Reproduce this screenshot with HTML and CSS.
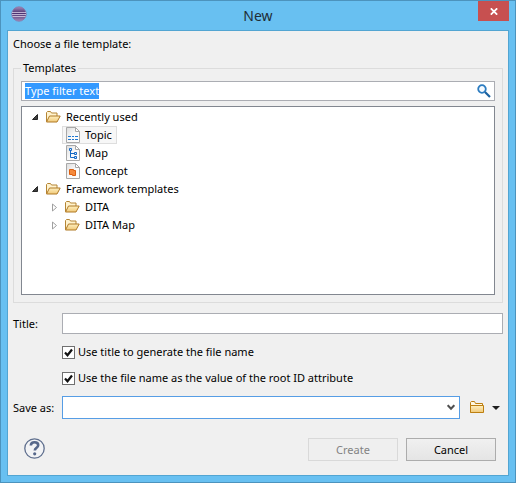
FILE: index.html
```html
<!DOCTYPE html>
<html lang="en">
<head>
<meta charset="utf-8">
<title>New</title>
<link rel="stylesheet" href="styles.css">
</head>
<body>
<svg class="defs" width="0" height="0" aria-hidden="true">
  <defs>
    <linearGradient id="gold" x1="0" y1="0" x2="0" y2="1"><stop offset="0" stop-color="#fff0c0"/><stop offset="1" stop-color="#f0c878"/></linearGradient>
    <linearGradient id="orb" x1="0" y1="0" x2="0" y2="1"><stop offset="0" stop-color="#a58cba"/><stop offset=".45" stop-color="#4a3070"/><stop offset="1" stop-color="#a58cba"/></linearGradient>
    <linearGradient id="page" x1="0" y1="0" x2="1" y2="1"><stop offset="0" stop-color="#dcdcdc"/><stop offset=".5" stop-color="#f8f8f8"/><stop offset="1" stop-color="#fff"/></linearGradient>
    <symbol id="folder-open" viewBox="0 0 16 16">
      <path d="M1.500 12.500v-9l1-1h3l1 1.500h5.500v3" fill="#fff3cf" stroke="#b58534"/>
      <path d="M1.500 13L4.500 7h10.700L12 13z" fill="url(#gold)" stroke="#b07a26"/>
    </symbol>
    <symbol id="doc" viewBox="0 0 14 16">
      <path d="M.5.5h9l4 4v11H.5z" fill="url(#page)" stroke="#a8a8a8"/>
      <path d="M9.500.5v4h4z" fill="#fff" stroke="#a8a8a8"/>
    </symbol>
    <symbol id="open" viewBox="0 0 6 6"><path d="M5.500.5v5h-5z" fill="#404040" stroke="#262626"/></symbol>
    <symbol id="closed" viewBox="0 0 7 9"><path d="M1.500 1v7L5.500 4.500z" fill="#fff" stroke="#a0a0a0"/></symbol>
    <symbol id="tick" viewBox="0 0 13 13"><path d="M3 6.500l2.500 2.700L10 3.500" fill="none" stroke="#111" stroke-width="2.200"/></symbol>
  </defs>
</svg>

<div class="window">
  <header class="titlebar">
    <svg class="app-icon" width="16" height="16" viewBox="0 0 16 16" aria-hidden="true">
      <circle cx="8" cy="8" r="7.200" fill="url(#orb)" stroke="#8a74a6" stroke-width=".8"/>
      <path d="M1 6.500h14M1 8.500h14M1.500 10.500h13" stroke="#d9cfe6" stroke-opacity=".8"/>
    </svg>
    <h1 class="title">New</h1>
    <button class="close" type="button" aria-label="Close">
      <svg width="8" height="7" viewBox="0 0 8 7"><path d="M.8.3l6.400 6.400M7.200.3L.8 6.700" stroke="#fff" stroke-width="1.700"/></svg>
    </button>
  </header>

  <form class="client">
    <p class="prompt">Choose a file template:</p>

    <fieldset class="group">
      <legend>Templates</legend>
      <div class="filter">
        <input id="filter" class="filter-text" type="text" value="Type filter text" aria-label="Filter templates" spellcheck="false" autocomplete="off">
        <svg width="14" height="14" viewBox="0 0 14 14" aria-hidden="true"><circle cx="5" cy="5" r="3.800" fill="#f4faff" stroke="#2c7cc0" stroke-width="1.800"/><path d="M8 8l5 5" stroke="#1c62a0" stroke-width="2.200"/></svg>
      </div>

      <ul class="tree" role="tree">
        <li role="treeitem" aria-expanded="true">
          <div class="row"><span class="twisty"><svg width="6" height="6"><use href="#open"/></svg></span><svg width="16" height="16"><use href="#folder-open"/></svg><span class="name">Recently used</span></div>
          <ul role="group">
            <li role="treeitem" aria-selected="true"><div class="row"><span class="twisty"></span><span class="item selected"><svg width="14" height="16"><use href="#doc"/><path d="M2 9.500h3m1 0h2m1 0h3M2 12.500h3m1 0h2m1 0h3" stroke="#1e78d2"/></svg><span class="name">Topic</span></span></div></li>
            <li role="treeitem"><div class="row"><span class="twisty"></span><span class="item"><svg width="14" height="16"><use href="#doc"/><path d="M4.500 5v7.500H8M4.500 8.500H8" fill="none" stroke="#1469c4"/><path d="M3.500 3.500h2v2h-2zM8.500 7.500h2v2h-2zM8.500 11.500h2v2h-2z" fill="#dcecff" stroke="#1469c4"/></svg><span class="name">Map</span></span></div></li>
            <li role="treeitem"><div class="row"><span class="twisty"></span><span class="item"><svg width="14" height="16"><use href="#doc"/><path d="M3.500 6.500h4v1h2v5h-3v-1h-3z" fill="#f58a3c" stroke="#dc5f10"/></svg><span class="name">Concept</span></span></div></li>
          </ul>
        </li>
        <li role="treeitem" aria-expanded="true">
          <div class="row"><span class="twisty"><svg width="6" height="6"><use href="#open"/></svg></span><svg width="16" height="16"><use href="#folder-open"/></svg><span class="name">Framework templates</span></div>
          <ul role="group">
            <li role="treeitem" aria-expanded="false"><div class="row"><span class="twisty"><svg width="7" height="9"><use href="#closed"/></svg></span><svg width="16" height="16"><use href="#folder-open"/></svg><span class="name">DITA</span></div></li>
            <li role="treeitem" aria-expanded="false"><div class="row"><span class="twisty"><svg width="7" height="9"><use href="#closed"/></svg></span><svg width="16" height="16"><use href="#folder-open"/></svg><span class="name">DITA Map</span></div></li>
          </ul>
        </li>
      </ul>
    </fieldset>

    <div class="fields">
      <label for="doc-title">Title:</label>
      <input id="doc-title" class="text" type="text">
      <label class="check"><span class="box"><input type="checkbox" checked><svg width="13" height="13"><use href="#tick"/></svg></span>Use title to generate the file name</label>
      <label class="check"><span class="box"><input type="checkbox" checked><svg width="13" height="13"><use href="#tick"/></svg></span>Use the file name as the value of the root ID attribute</label>
      <label for="save-as">Save as:</label>
      <div class="save">
        <div class="combo">
          <select id="save-as"><option></option></select>
          <svg width="8" height="7" viewBox="0 0 8 7" aria-hidden="true"><path d="M.7 1.200L4 4.800l3.300-3.600" fill="none" stroke="#505050" stroke-width="2"/></svg>
        </div>
        <button class="browse" type="button" aria-label="Browse">
          <svg width="14" height="13" viewBox="0 0 14 13"><path d="M.5 11.500v-10l.8-1h3.200l1 2h7v3" fill="#fff8e2" stroke="#bd7f10"/><path d="M.5 4.500h13v7H.5z" fill="url(#gold)" stroke="#bd7f10"/></svg>
          <svg width="8" height="4" viewBox="0 0 8 4"><path d="M0 0h8L4 4z" fill="#1e1e1e"/></svg>
        </button>
      </div>
    </div>

    <footer class="actions">
      <button class="help" type="button" aria-label="Help">
        <svg width="21" height="21" viewBox="0 0 21 21"><circle cx="10.500" cy="10.500" r="9.700" fill="#f2f3f5" stroke="#5f6f8e" stroke-width="1.300"/><path d="M6.800 7.500C7 5.300 8.400 4.300 10.500 4.300c2.200 0 3.700 1.100 3.700 2.900 0 2.500-3.400 2.500-3.400 5.300" fill="none" stroke="#56678a" stroke-width="2.600"/><circle cx="10.700" cy="15.800" r="1.600" fill="#56678a"/></svg>
      </button>
      <button class="push" type="submit" disabled>Create</button>
      <button class="push" type="button">Cancel</button>
    </footer>
  </form>
</div>
<script>
  document.getElementById('filter').focus();
  document.getElementById('filter').select();
</script>
</body>
</html>
```
FILE: styles.css
```css
* { box-sizing: border-box; }

body {
  margin: 0;
  color: #000;
  font: 11px/16px "Noto Sans", "Open Sans", sans-serif;
}

svg { display: block; flex: none; }
.defs { position: absolute; }

input, select, button {
  margin: 0;
  padding: 0;
  border: 0;
  border-radius: 0;
  outline: 0;
  background: none;
  color: inherit;
  font: inherit;
  appearance: none;
}

.window {
  display: flex;
  flex-direction: column;
  min-height: 100vh;
  padding: 0 6px 6px;
  border: 1px solid #4c93bd;
  background: #68c0f1;
}

.titlebar {
  display: grid;
  grid-template-columns: 1fr auto 1fr;
  height: 29px;
}
.app-icon { margin: 5px 0 0 4px; }
.title {
  margin: 5px 0 0;
  color: #1f2d36;
  font-size: 14px;
  font-weight: 400;
  line-height: 20px;
}
.close {
  display: grid;
  place-items: center;
  justify-self: end;
  width: 31px;
  height: 20px;
  background: #c75050;
}

.client {
  display: flex;
  flex: 1;
  flex-direction: column;
  padding: 5px 5px 14px;
  border: 1px solid #52a5d2;
  background: #f0f0f0;
}
.prompt { margin: 0 0 8px; }

.group {
  display: flex;
  flex: 1;
  flex-direction: column;
  gap: 5px;
  min-width: 0;
  margin: 0 0 10px;
  padding: 5px 7px 7px;
  border: 1px solid #dcdcdc;
}
.group legend { padding: 0 2px; }

.filter {
  display: flex;
  align-items: center;
  height: 20px;
  padding: 0 3px;
  border: 1px solid #abadb3;
  background: #fff;
}
.filter-text { flex: 1; min-width: 0; }
.filter-text::selection { background: #3399ff; color: #fff; }

.tree, .tree ul { margin: 0; padding: 0; list-style: none; }
.tree {
  height: calc(100vh - 294px);
  min-height: 130px;
  padding: 1px 10px;
  border: 1px solid #828790;
  background: #fff;
  overflow: auto;
}
.tree ul { padding-left: 19px; }
.row, .item { display: flex; align-items: center; height: 18px; }
.twisty { width: 13px; flex: none; }
.name { padding: 0 4px 0 5px; }
.item { padding-left: 3px; border: 1px solid transparent; }
.row > .item { margin-left: -2px; }
.selected { border-color: #dedede; background: #f7f7f7; }

.fields {
  display: grid;
  grid-template-columns: 49px 1fr;
  align-items: center;
  gap: 10px 0;
}
.text {
  width: 100%;
  height: 21px;
  padding: 0 3px;
  border: 1px solid #abadb3;
  background: #fff;
}
.check {
  display: flex;
  grid-column: 2;
  align-items: center;
  justify-self: start;
  gap: 3px;
}
.box, .combo { display: grid; align-items: center; }
.box > *, .combo > * { grid-area: 1 / 1; }
.box svg, .combo svg { pointer-events: none; }
.box input {
  width: 13px;
  height: 13px;
  border: 1px solid #707070;
  background: #fff;
}
.box input:not(:checked) + svg { visibility: hidden; }

.save { display: flex; gap: 10px; padding-right: 3px; }
.combo { flex: 1; }
.combo select {
  width: 100%;
  height: 23px;
  padding: 0 20px 0 3px;
  border: 1px solid #569de5;
  background: #fff;
}
.combo svg { justify-self: end; margin-right: 5px; }
.browse { display: flex; align-items: center; gap: 8px; }

.actions {
  display: flex;
  gap: 8px;
  margin-top: 19px;
  padding: 0 7px 0 11px;
}
.help { align-self: flex-start; margin-right: auto; }
.push {
  width: 90px;
  height: 23px;
  border: 1px solid #acacac;
  background: linear-gradient(#f0f0f0, #e5e5e5);
}
.push:disabled { border-color: #d9d9d9; background: #efefef; color: #838383; }
```
